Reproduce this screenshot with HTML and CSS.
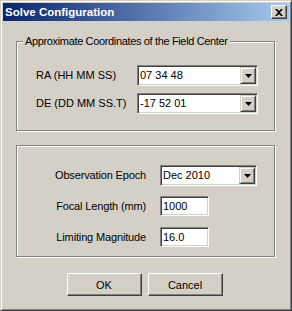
FILE: index.html
```html
<!DOCTYPE html>
<html lang="en">

<head>
    <meta charset="UTF-8">
    <title>Solve Configuration</title>
    <link rel="stylesheet" href="styles.css">
</head>

<body>

    <div class="window">
        <div class="title-bar">
            <span class="title">Solve Configuration</span>
            <button class="close-btn">
                <svg width="8" height="7" viewBox="0 0 8 7">
                    <path d="M0 0h2l2 2l2-2h2l-3 3.5l3 3.5h-2l-2-2l-2 2h-2l3-3.5z" fill="#000"/>
                </svg>
            </button>
        </div>

        <div class="group coords">
            <span class="group-title">Approximate Coordinates of the Field Center</span>
            <div class="row">
                <label>RA (HH MM SS)</label>
                <div class="combo wide">
                    <span class="combo-text">07 34 48</span>
                    <span class="combo-btn"><svg width="7" height="4" viewBox="0 0 7 4"><path d="M0 0h7l-3.5 4z" fill="#000"/></svg></span>
                </div>
            </div>
            <div class="row">
                <label>DE (DD MM SS.T)</label>
                <div class="combo wide">
                    <span class="combo-text">-17 52 01</span>
                    <span class="combo-btn"><svg width="7" height="4" viewBox="0 0 7 4"><path d="M0 0h7l-3.5 4z" fill="#000"/></svg></span>
                </div>
            </div>
        </div>

        <div class="group params">
            <div class="row">
                <label>Observation Epoch</label>
                <div class="combo narrow">
                    <span class="combo-text">Dec 2010</span>
                    <span class="combo-btn"><svg width="7" height="4" viewBox="0 0 7 4"><path d="M0 0h7l-3.5 4z" fill="#000"/></svg></span>
                </div>
            </div>
            <div class="row field">
                <label>Focal Length (mm)</label>
                <input class="textbox" type="text" value="1000">
            </div>
            <div class="row field last">
                <label>Limiting Magnitude</label>
                <input class="textbox" type="text" value="16.0">
            </div>
        </div>

        <div class="buttons">
            <button class="push-btn">OK</button>
            <button class="push-btn">Cancel</button>
        </div>
    </div>

</body>

</html>
```

FILE: styles.css
```css
body {
    margin: 0;
    padding: 0;
    background-color: #d4d0c8;
    font-family: "Liberation Sans", Arial, sans-serif;
    font-size: 11px;
    line-height: 13px;
    color: #000;
}

.window {
    width: 292px;
    height: 311px;
    box-sizing: border-box;
    padding: 2px;
    border: 1px solid;
    border-color: #d4d0c8 #404040 #404040 #d4d0c8;
    box-shadow: inset 1px 1px 0 #fff, inset -1px -1px 0 #808080;
    background-color: #d4d0c8;
}

.title-bar {
    height: 18px;
    display: flex;
    align-items: center;
    justify-content: space-between;
    padding: 0 2px;
    background: linear-gradient(to right, #0a246a, #a6caf0);
}

.title {
    color: #fff;
    font-weight: bold;
    font-size: 11.5px;
}

.close-btn {
    width: 16px;
    height: 14px;
    padding: 0;
    display: flex;
    align-items: center;
    justify-content: center;
    background-color: #d4d0c8;
    border: 1px solid;
    border-color: #fff #404040 #404040 #fff;
    box-shadow: inset -1px -1px 0 #808080;
}

/* etched group boxes */
.group {
    display: flex;
    flex-direction: column;
    margin: 0 14px 0 13px;
    border: 1px solid #808080;
    box-shadow: inset 1px 1px 0 #fff, 1px 1px 0 #fff;
}

.coords {
    margin-top: 20px;
    padding: 0 0 16px 19px;
}

.group-title {
    align-self: flex-start;
    margin: -7px 0 0 -13px;
    padding: 0 2px;
    background-color: #d4d0c8;
    letter-spacing: -0.35px;
}

.coords .row {
    margin-top: 7px;
}

.coords .row:first-of-type {
    margin-top: 17px;
}

.coords label {
    width: 101px;
}

.params {
    margin-top: 14px;
    padding: 19px 0 9px 0;
}

.params label {
    width: 129px;
    margin-right: 14px;
    text-align: right;
    letter-spacing: -0.15px;
}

.row {
    display: flex;
    align-items: center;
    height: 21px;
}

.row.field {
    height: 20px;
    margin-top: 10px;
}

.row.last {
    margin-top: 11px;
}

/* sunken controls */
.combo,
.textbox {
    box-sizing: border-box;
    border: 1px solid;
    border-color: #808080 #fff #fff #808080;
    box-shadow: inset 1px 1px 0 #404040, inset -1px -1px 0 #d4d0c8;
    background-color: #fff;
}

.combo {
    height: 21px;
    display: flex;
    align-items: center;
    padding: 1px;
}

.combo.wide {
    width: 121px;
}

.combo.narrow {
    width: 97px;
}

.combo-text {
    flex: 1;
    padding-left: 1px;
}

.combo-btn {
    width: 16px;
    height: 17px;
    box-sizing: border-box;
    display: flex;
    align-items: center;
    justify-content: center;
    background-color: #d4d0c8;
    border: 1px solid;
    border-color: #d4d0c8 #404040 #404040 #d4d0c8;
    box-shadow: inset 1px 1px 0 #fff, inset -1px -1px 0 #808080;
}

.textbox {
    width: 49px;
    height: 20px;
    margin: 0;
    padding: 0 2px;
    font-family: inherit;
    font-size: 11px;
    color: #000;
    outline: none;
}

.buttons {
    display: flex;
    justify-content: center;
    gap: 6px;
    margin-top: 16px;
    padding-right: 3px;
}

.push-btn {
    width: 75px;
    height: 23px;
    padding: 0;
    font-family: inherit;
    font-size: 11px;
    color: #000;
    background-color: #d4d0c8;
    border: 1px solid;
    border-color: #fff #404040 #404040 #fff;
    box-shadow: inset -1px -1px 0 #808080;
}
```
